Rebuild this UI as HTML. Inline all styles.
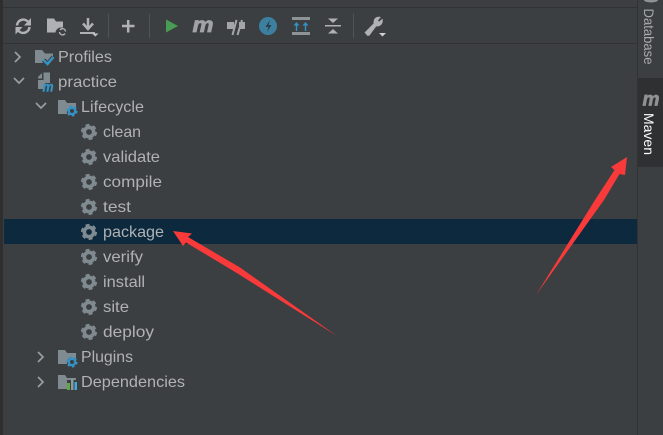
<!DOCTYPE html>
<html><head><meta charset="utf-8"><style>
html,body{margin:0;padding:0;background:#3c3f41;width:663px;height:435px;overflow:hidden}
svg{display:block}
text{font-family:"Liberation Sans",sans-serif;font-size:16px;fill:#b0b2b4}
</style></head><body>
<svg width="663" height="435" viewBox="0 0 663 435" xmlns="http://www.w3.org/2000/svg">
<defs>
<g id="gear"><circle r="4.7" fill="none" stroke="#7f8b91" stroke-width="3.6"/><circle r="6.8" fill="none" stroke="#7f8b91" stroke-width="2.6" stroke-dasharray="3.8 3.32"/></g>
<g id="bgear"><circle r="3.2" fill="none" stroke="#3592c4" stroke-width="2.4"/><circle r="4.7" fill="none" stroke="#3592c4" stroke-width="1.8" stroke-dasharray="2.4 2.52"/></g>
<path id="cr" d="M-3-5l5 5-5 5" fill="none" stroke="#9a9da0" stroke-width="1.700"/>
<path id="cd" d="M-5-3l5 5 5-5" fill="none" stroke="#9a9da0" stroke-width="1.700"/>
</defs>
<rect width="663" height="435" fill="#3c3f41"/>
<rect x="0" y="0" width="3" height="435" fill="#2e2e2e"/>
<rect x="3" y="7" width="634" height="1" fill="#323232"/>
<rect x="3" y="43" width="634" height="1" fill="#323232"/>
<rect x="637" y="0" width="1" height="435" fill="#323232"/>
<rect x="638" y="78" width="25" height="89" fill="#2f3031"/>
<rect x="4" y="219" width="633" height="25" fill="#0d293e"/>

<!-- toolbar -->
<g fill="none" stroke="#afb1b3" stroke-width="2.500">
<path d="M17 25.500a6.300 6.300 0 0 1 11-3.800M29.500 27a6.300 6.300 0 0 1-11 3.800"/>
</g>
<path d="M31 18v7.500h-7zM15.500 34.500v-7.500h7z" fill="#afb1b3"/>
<path d="M47 18.500h7l2 3h7v6h-3a5.500 5.500 0 0 0-4.500 5h-8.500z" fill="#afb1b3"/>
<path d="M59.500 32a3 3 0 0 0 5.500 1.500M65.500 31.500a3 3 0 0 0-5.500-1.500" fill="none" stroke="#afb1b3" stroke-width="1.400"/>
<path d="M88 18v10" stroke="#afb1b3" stroke-width="2.500"/>
<path d="M83 23.500l5 5.500 5-5.500" fill="none" stroke="#afb1b3" stroke-width="2.500"/>
<rect x="80" y="32" width="15" height="2" fill="#afb1b3"/>
<path d="M92 33.500h6.500l-3.200 3z" fill="#c4c5c6"/>
<rect x="108" y="14" width="1" height="24" fill="#515456"/>
<path d="M122 26h12.500M128.200 20v12.500" stroke="#afb1b3" stroke-width="2.500"/>
<rect x="149" y="14" width="1" height="24" fill="#515456"/>
<path d="M166 19.500l12 6.500-12 6.500z" fill="#499c54"/>
<text x="192.500" y="32" style="font-size:21px;font-weight:bold;font-style:italic;fill:#a0a2a4;stroke:#a0a2a4;stroke-width:.8" textLength="21" lengthAdjust="spacingAndGlyphs">m</text>
<rect x="227" y="22" width="7" height="7" fill="#a3a5a7"/>
<rect x="239" y="22" width="6" height="7" fill="#a3a5a7"/>
<path d="M232.500 35l4-15M237.500 35l4.500-15" stroke="#a3a5a7" stroke-width="2"/>
<circle cx="268" cy="26" r="9" fill="#3d7f9f"/>
<path d="M270 20l-4.500 7h3l-1.500 5 4.500-7h-3z" fill="#2b3c46"/>
<rect x="292" y="17" width="18" height="3" fill="#8d9396"/>
<rect x="292" y="32" width="18" height="3" fill="#8d9396"/>
<path d="M296.500 31v-8M305.500 31v-8" stroke="#3592c4" stroke-width="1.400"/>
<path d="M293.500 25.500l3-3.500 3 3.500zM302.500 25.500l3-3.500 3 3.500z" fill="#3592c4"/>
<rect x="325" y="25" width="16" height="1.500" fill="#afb1b3"/>
<path d="M328 18.500h10l-5 4.500zM328 33.500h10l-5-4.500z" fill="#afb1b3"/>
<rect x="353" y="14" width="1" height="24" fill="#515456"/>
<path d="M367.500 35l-2-2.500 9-9c-1-3 1-6.500 5-6l-2.500 3 2 2 3-2.500c.5 4-3 6.500-6 5.500l-7 9.500z" fill="#afb1b3" stroke="#afb1b3" stroke-width="1.400"/>
<path d="M379 33h7l-3.500 3.500z" fill="#cfd0d1"/>

<!-- chevrons -->
<use href="#cr" x="18" y="57"/>
<use href="#cd" x="19" y="81"/>
<use href="#cd" x="41" y="106"/>
<use href="#cr" x="41" y="357"/>
<use href="#cr" x="41" y="382"/>

<!-- Profiles icon -->
<path d="M35 50h7l3 3.500h8v3.500l-7 6h-11z" fill="#7f8b91"/>
<path d="M43.500 60l4 4 6-7" fill="none" stroke="#3c3f41" stroke-width="4.500"/>
<path d="M43.500 60l4 4 6-7" fill="none" stroke="#3592c4" stroke-width="2.500"/>
<!-- practice icon -->
<path d="M38 77l4-4v5.500h-4zM43.500 72.500h6.500v10.500h-5l-1 6h-6v-9h5.500z" fill="#7f8b91"/>
<text x="42.500" y="91.500" style="font-size:14px;font-weight:bold;font-style:italic;fill:#3592c4;stroke:#3592c4;stroke-width:.5" textLength="11" lengthAdjust="spacingAndGlyphs">m</text>
<!-- Lifecycle icon -->
<path d="M58 100h7l2 3h9v5h-6a5 5 0 0 0-3 6h-9z" fill="#7f8b91"/>
<use href="#bgear" x="72" y="111"/>
<!-- Plugins icon -->
<path d="M58 350h7l2 3h9v5h-6a5 5 0 0 0-3 6h-9z" fill="#7f8b91"/>
<use href="#bgear" x="72" y="362"/>
<!-- Dependencies icon -->
<path d="M58 375h7l2 3h9v2h-9v9h-9z" fill="#7f8b91"/>
<rect x="67" y="383" width="3" height="7" fill="#62a83f"/>
<rect x="71" y="379" width="2.500" height="11" fill="#8c9aa3"/>
<rect x="74.500" y="382" width="2.500" height="8" fill="#3fa9d8"/>

<!-- gears -->
<use href="#gear" x="89" y="132"/>
<use href="#gear" x="89" y="157"/>
<use href="#gear" x="89" y="182"/>
<use href="#gear" x="89" y="207"/>
<use href="#gear" x="89" y="232"/>
<use href="#gear" x="89" y="257"/>
<use href="#gear" x="89" y="282"/>
<use href="#gear" x="89" y="307"/>
<use href="#gear" x="89" y="332"/>

<!-- labels -->
<text x="58" y="62" textLength="54" lengthAdjust="spacingAndGlyphs">Profiles</text>
<text x="58" y="87" textLength="59" lengthAdjust="spacingAndGlyphs">practice</text>
<text x="81" y="112" textLength="63" lengthAdjust="spacingAndGlyphs">Lifecycle</text>
<text x="103" y="137" textLength="38" lengthAdjust="spacingAndGlyphs">clean</text>
<text x="103" y="162" textLength="57" lengthAdjust="spacingAndGlyphs">validate</text>
<text x="103" y="187" textLength="59" lengthAdjust="spacingAndGlyphs">compile</text>
<text x="103" y="212" textLength="28" lengthAdjust="spacingAndGlyphs">test</text>
<text x="103" y="237" textLength="61" lengthAdjust="spacingAndGlyphs">package</text>
<text x="103" y="262" textLength="40" lengthAdjust="spacingAndGlyphs">verify</text>
<text x="103" y="287" textLength="42" lengthAdjust="spacingAndGlyphs">install</text>
<text x="103" y="312" textLength="26" lengthAdjust="spacingAndGlyphs">site</text>
<text x="103" y="337" textLength="51" lengthAdjust="spacingAndGlyphs">deploy</text>
<text x="81" y="362" textLength="52" lengthAdjust="spacingAndGlyphs">Plugins</text>
<text x="81" y="387" textLength="104" lengthAdjust="spacingAndGlyphs">Dependencies</text>

<!-- right strip -->
<path d="M644 0a7 2.500 0 0 0 14 0z" fill="#8f9295"/>
<text transform="translate(644,8.500) rotate(90)" style="font-size:14px;fill:#a9abad" textLength="56" lengthAdjust="spacingAndGlyphs">Database</text>
<text x="642.500" y="105.500" style="font-size:19px;font-weight:bold;font-style:italic;fill:#8f9193;stroke:#8f9193;stroke-width:.7" textLength="17" lengthAdjust="spacingAndGlyphs">m</text>
<text transform="translate(644,113) rotate(90)" style="font-size:14px;fill:#ffffff" textLength="42" lengthAdjust="spacingAndGlyphs">Maven</text>

<!-- arrows -->
<polygon points="173,231 192,233.500 188,237 240,267.500 337,336 236,272.500 186,242.500 183,246" fill="#f93a3a"/>
<polygon points="627,157 611,167 614.500,170 595,200 536,295 604,200 619.500,174 625,175" fill="#f93a3a"/>
</svg>
</body></html>
